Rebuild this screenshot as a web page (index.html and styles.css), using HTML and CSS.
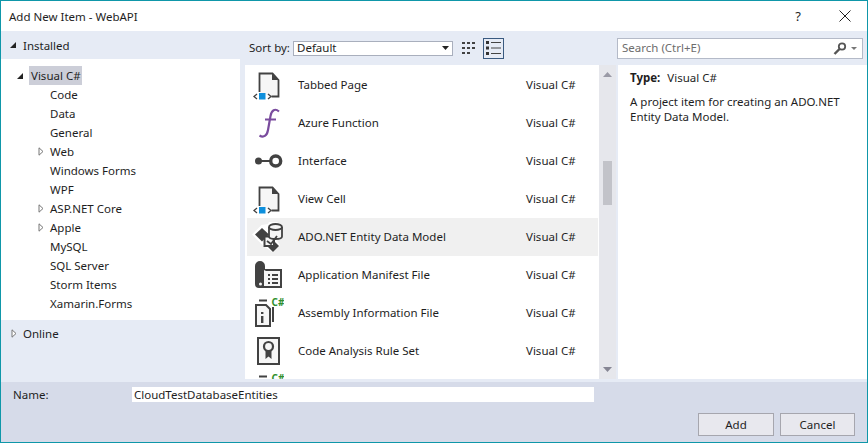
FILE: index.html
```html
<!DOCTYPE html>
<html>
<head>
  <meta charset="utf-8">
  <title>Add New Item - WebAPI</title>
  <link rel="stylesheet" href="styles.css">
</head>
<body>
  <div class="dialog">
    <div class="titlebar">
      <span class="title">Add New Item - WebAPI</span>
      <span class="help">?</span>
      <svg class="close" width="12" height="12" viewBox="0 0 12 12"><path d="M.5.5l11 11M11.5.5l-11 11" stroke="#222" fill="none"/></svg>
    </div>

    <div class="main">
      <div class="nav">
        <div class="nav-head">
          <svg class="arrow" width="8" height="8" viewBox="0 0 8 8"><path d="M7 1v6H1z" fill="#222"/></svg>
          Installed
        </div>
        <div class="tree">
          <div class="tree-row top">
            <svg class="arrow" width="8" height="8" viewBox="0 0 8 8"><path d="M7 1v6H1z" fill="#222"/></svg>
            <span class="selected">Visual C#</span>
          </div>
          <div class="tree-row">Code</div>
          <div class="tree-row">Data</div>
          <div class="tree-row">General</div>
          <div class="tree-row has-arrow"><svg class="arrow" width="6" height="9" viewBox="0 0 6 9"><path d="M1 .8l4 3.7-4 3.7z" fill="#fff" stroke="#777"/></svg>Web</div>
          <div class="tree-row">Windows Forms</div>
          <div class="tree-row">WPF</div>
          <div class="tree-row has-arrow"><svg class="arrow" width="6" height="9" viewBox="0 0 6 9"><path d="M1 .8l4 3.7-4 3.7z" fill="#fff" stroke="#777"/></svg>ASP.NET Core</div>
          <div class="tree-row has-arrow"><svg class="arrow" width="6" height="9" viewBox="0 0 6 9"><path d="M1 .8l4 3.7-4 3.7z" fill="#fff" stroke="#777"/></svg>Apple</div>
          <div class="tree-row">MySQL</div>
          <div class="tree-row">SQL Server</div>
          <div class="tree-row">Storm Items</div>
          <div class="tree-row">Xamarin.Forms</div>
        </div>
        <div class="nav-foot">
          <svg class="arrow" width="6" height="9" viewBox="0 0 6 9"><path d="M1 .8l4 3.7-4 3.7z" fill="#fff" stroke="#777"/></svg>
          Online
        </div>
      </div>

      <div class="content">
        <div class="toolbar">
          <span class="sort-label">Sort by:</span>
          <div class="select">
            <span>Default</span>
            <svg width="7" height="4" viewBox="0 0 7 4"><path d="M0 0h7L3.500 4z" fill="#222"/></svg>
          </div>
          <svg class="view-grid" width="14" height="14" viewBox="0 0 14 14">
            <path d="M0 1h3v2H0zM5 1h3v2H5zM10 1h3v2h-3zM0 6h3v2H0zM5 6h3v2H5zM10 6h3v2h-3zM0 11h3v2H0zM5 11h3v2H5z" fill="#424242"/>
          </svg>
          <div class="view-list">
            <svg width="15" height="14" viewBox="0 0 15 14">
              <path d="M0 0h3v3H0zM0 5.500h3v3H0zM0 11h3v3H0z" fill="#333"/>
              <path d="M5 1.500h10M5 7h10M5 12.500h10" stroke="#444" fill="none"/>
            </svg>
          </div>
          <div class="search">
            <span class="search-text">Search (Ctrl+E)</span>
            <svg width="14" height="13" viewBox="0 0 14 13"><circle cx="9" cy="4.500" r="3.200" fill="none" stroke="#555" stroke-width="1.800"/><path d="M6.500 7L1.500 12" stroke="#555" stroke-width="2.400"/></svg>
            <svg class="search-drop" width="6" height="3" viewBox="0 0 6 3"><path d="M0 0h6L3 3z" fill="#777"/></svg>
          </div>
        </div>

        <div class="body">
          <div class="list">
            <div class="item">
              <svg class="icon" width="32" height="32" viewBox="0 0 32 32"><use href="#ic-xaml"/></svg>
              <span class="item-name">Tabbed Page</span><span class="item-lang">Visual C#</span>
            </div>
            <div class="item">
              <svg class="icon" width="32" height="32" viewBox="0 0 32 32"><path d="M27 4.500C23 1 19.500 3 18.500 9L16 23C15 29 11.500 31 7.500 28.500M13 12.500H24" fill="none" stroke="#7a4c9e" stroke-width="2.200"/></svg>
              <span class="item-name">Azure Function</span><span class="item-lang">Visual C#</span>
            </div>
            <div class="item">
              <svg class="icon" width="32" height="32" viewBox="0 0 32 32"><circle cx="6.500" cy="16" r="3.500" fill="#424242"/><path d="M8 16h10" stroke="#424242" stroke-width="2"/><circle cx="23.700" cy="16" r="5" fill="#fff" stroke="#424242" stroke-width="3.400"/></svg>
              <span class="item-name">Interface</span><span class="item-lang">Visual C#</span>
            </div>
            <div class="item">
              <svg class="icon" width="32" height="32" viewBox="0 0 32 32"><use href="#ic-xaml"/></svg>
              <span class="item-name">View Cell</span><span class="item-lang">Visual C#</span>
            </div>
            <div class="item active">
              <svg class="icon" width="32" height="32" viewBox="0 0 32 32">
                <path d="M16 3L9.500 4 0 13.500l9 9 3 3 9 6 7-7-3-5 5-5V5l-5-4-8 0z" fill="#fff"/>
                <path d="M10 7l7 6.500-7 7-7-7z" fill="#424242"/>
                <path d="M21 19l6 6-6 6-6-6z" fill="#424242"/>
                <path d="M12.500 15.500h9.500v9.500h-9.500z" fill="#f6f6f6" stroke="#424242" stroke-width="2"/>
                <path d="M17 6v9.500c0 1.500 3 2.500 6.500 2.500s6.500-1 6.500-2.500V6" fill="#f6f6f6" stroke="#424242" stroke-width="1.800"/>
                <ellipse cx="23.500" cy="6" rx="6.500" ry="3" fill="#f6f6f6" stroke="#424242" stroke-width="1.800"/>
                <path d="M15 20l4 3 6-8" fill="none" stroke="#424242" stroke-width="1.800"/>
              </svg>
              <span class="item-name">ADO.NET Entity Data Model</span><span class="item-lang">Visual C#</span>
            </div>
            <div class="item">
              <svg class="icon" width="32" height="32" viewBox="0 0 32 32">
                <path d="M3 7a5 5 0 0 1 10 0v3h17v19H7a4 4 0 0 1-4-4z" fill="#424242"/>
                <path d="M14 12h14v15H12v-16z" fill="#f6f6f6"/>
                <path d="M16 15h2v2h-2zM20 15h6v2h-6zM16 19h2v2h-2zM20 19h6v2h-6zM16 23h2v2h-2zM20 23h6v2h-6z" fill="#424242"/>
                <circle cx="8.500" cy="25" r="1.500" fill="#f6f6f6"/>
              </svg>
              <span class="item-name">Application Manifest File</span><span class="item-lang">Visual C#</span>
            </div>
            <div class="item">
              <svg class="icon" width="32" height="32" viewBox="0 0 32 32"><use href="#ic-assembly"/></svg>
              <span class="item-name">Assembly Information File</span><span class="item-lang">Visual C#</span>
            </div>
            <div class="item">
              <svg class="icon" width="32" height="32" viewBox="0 0 32 32">
                <rect x="6" y="3" width="21" height="26" fill="#f6f6f6" stroke="#424242" stroke-width="2"/>
                <path d="M13.500 14v10l3-2.500 3 2.500V14z" fill="#424242"/>
                <circle cx="16.500" cy="11.500" r="4.500" fill="#f6f6f6" stroke="#424242" stroke-width="2.200"/>
              </svg>
              <span class="item-name">Code Analysis Rule Set</span><span class="item-lang">Visual C#</span>
            </div>
            <div class="item">
              <svg class="icon" width="32" height="32" viewBox="0 0 32 32"><use href="#ic-assembly"/></svg>
            </div>
          </div>

          <div class="scrollbar">
            <svg width="9" height="5" viewBox="0 0 9 5"><path d="M4.500 0L9 5H0z" fill="#9a9aa6"/></svg>
            <div class="scroll-track"><div class="scroll-thumb"></div></div>
            <svg width="9" height="5" viewBox="0 0 9 5"><path d="M0 0h9L4.500 5z" fill="#868694"/></svg>
          </div>

          <div class="details">
            <p class="type"><b>Type:</b> Visual C#</p>
            <p class="desc">A project item for creating an ADO.NET Entity Data Model.</p>
          </div>
        </div>
      </div>
    </div>

    <div class="footer">
      <div class="name-row">
        <label class="name-label" for="name">Name:</label>
        <input class="name-input" id="name" type="text" value="CloudTestDatabaseEntities">
      </div>
      <div class="buttons">
        <button class="btn btn-add">Add</button>
        <button class="btn">Cancel</button>
      </div>
    </div>
  </div>

  <!-- shared icons -->
  <svg class="defs" width="0" height="0">
    <defs>
      <g id="ic-xaml">
        <path d="M7.500 23V4.500h13l6 6.500v16.500h-7" fill="#f6f6f6" stroke="#424242" stroke-width="1.800"/>
        <path d="M20 4.500v6.500h7" fill="#424242"/>
        <path d="M5 25l-3 2.500L5 30M16 25l3 2.500L16 30" fill="none" stroke="#424242" stroke-width="1.300"/>
        <rect x="7" y="24" width="6.500" height="6.500" fill="#0e8fdc"/>
      </g>
      <g id="ic-assembly">
        <path d="M4 8h10l4 4v17H4z" fill="#f6f6f6" stroke="#424242" stroke-width="2"/>
        <path d="M7 3.500h8M21 10v15" stroke="#424242" stroke-width="2" fill="none"/>
        <path d="M9 15h2.400v2H9zM9 19h2.400v7H9z" fill="#424242"/>
        <text class="cs" x="19.500" y="9">C#</text>
      </g>
    </defs>
  </svg>
</body>
</html>
```

FILE: styles.css
```css
* {
  box-sizing: border-box;
}

html, body {
  margin: 0;
  height: 100%;
}

body {
  font-family: "Noto Sans", sans-serif;
  font-size: 11.5px;
  color: #1e1e1e;
  background: #fff;
}

.defs {
  display: block;
  height: 0;
}

.dialog {
  width: 868px;
  height: 443px;
  border: 1px solid #0f97a9;
  display: flex;
  flex-direction: column;
  overflow: hidden;
}

/* title */
.titlebar {
  height: 30px;
  flex: none;
  display: flex;
  align-items: center;
  padding-left: 8px;
  padding-right: 16px;
}

.title {
  flex: 1;
  font-size: 11.5px;
}

.help {
  font-size: 13px;
  margin-right: 38px;
}

/* main area */
.main {
  height: 351px;
  flex: none;
  display: flex;
  background: #e6ebf5;
}

.nav {
  width: 239px;
  flex: none;
  margin-right: 5px;
  display: flex;
  flex-direction: column;
}

.nav-head {
  height: 28px;
  flex: none;
  display: flex;
  align-items: center;
  padding-left: 8px;
  gap: 6px;
}

.nav-foot {
  flex: 1;
  display: flex;
  align-items: flex-start;
  padding: 6px 0 0 10px;
  gap: 6px;
  line-height: 15px;
}

.nav-foot .arrow {
  margin-top: 3px;
}

.tree {
  height: 261px;
  flex: none;
  background: #fff;
  padding-top: 7px;
}

.tree-row {
  height: 19px;
  line-height: 19px;
  padding-left: 49px;
  display: flex;
  align-items: center;
  white-space: nowrap;
}

.tree-row.top {
  padding-left: 15px;
  gap: 5px;
}

.tree-row.has-arrow {
  padding-left: 37px;
  gap: 6px;
}

.selected {
  background: #ccced8;
  padding: 0 2px;
  width: 53px;
}

/* toolbar */
.content {
  flex: 1;
  min-width: 0;
}

.toolbar {
  height: 34px;
  display: flex;
  align-items: center;
  padding-left: 4px;
}

.sort-label {
  width: 44px;
  padding-bottom: 2px;
}

.select {
  width: 160px;
  height: 15px;
  background: #fff;
  border: 1px solid #a9afbd;
  display: flex;
  align-items: center;
  justify-content: space-between;
  padding: 0 3px 0 3px;
  margin-right: 9px;
}

.select span {
  padding-bottom: 2px;
}

.view-grid {
  margin-right: 7px;
}

.view-list {
  width: 21px;
  height: 21px;
  border: 1px solid #3a5a80;
  display: flex;
  align-items: center;
  justify-content: center;
  margin-right: 113px;
}

.search {
  width: 246px;
  height: 21px;
  background: #fff;
  border: 1px solid #b4bac8;
  display: flex;
  align-items: center;
  padding: 0 5px 0 4px;
}

.search-text {
  flex: 1;
  color: #6d6d6d;
  padding-bottom: 2px;
}

.search-drop {
  margin-left: 4px;
}

/* list */
.body {
  height: 314px;
  display: flex;
}

.list {
  width: 354px;
  flex: none;
  background: #fff;
  padding: 0 1px 0 2px;
  overflow: hidden;
}

.item {
  height: 38px;
  display: flex;
  align-items: center;
  padding-left: 5px;
  flex: none;
}

.item:first-child {
  margin-top: 1px;
}

.item.active {
  background: #f0f0f0;
}

.icon {
  flex: none;
}

.item-name {
  margin-left: 14px;
  width: 228px;
  white-space: nowrap;
  padding-bottom: 2px;
}

.item-lang {
  white-space: nowrap;
  padding-bottom: 2px;
}

.cs {
  font-family: "Noto Sans", sans-serif;
  font-size: 10px;
  font-weight: bold;
  fill: #2f8f2f;
}

.scrollbar {
  width: 17px;
  flex: none;
  background: #e6e7ec;
  display: flex;
  flex-direction: column;
  align-items: center;
  padding: 7px 0;
}

.scroll-track {
  flex: 1;
  width: 9px;
  padding-top: 84px;
}

.scroll-thumb {
  height: 44px;
  background: #c2c3c9;
}

.details {
  flex: 1;
  margin-left: 2px;
  background: #fff;
  padding: 5px 12px;
}

.type {
  margin: 0 0 8px;
  line-height: 16px;
}

.type b {
  margin-right: 4px;
}

.desc {
  margin: 0;
  line-height: 15px;
  width: 220px;
}

/* footer */
.footer {
  flex: 1;
  background: #d6dbe9;
  padding: 5px 12px 6px 12px;
}

.name-row {
  display: flex;
  align-items: center;
  height: 15px;
}

.name-label {
  width: 119px;
}

.name-input {
  width: 462px;
  height: 15px;
  border: 0;
  padding: 0 2px;
  background: #fff;
  font: inherit;
  color: #1e1e1e;
  outline: none;
}

.buttons {
  display: flex;
  justify-content: flex-end;
  gap: 6px;
  margin-top: 11px;
}

.btn {
  width: 75px;
  height: 23px;
  background: #e8e8ee;
  border: 1px solid #a6a6ae;
  font: inherit;
  color: #1e1e1e;
  padding: 0;
}

.btn-add {
  width: 76px;
}
```
